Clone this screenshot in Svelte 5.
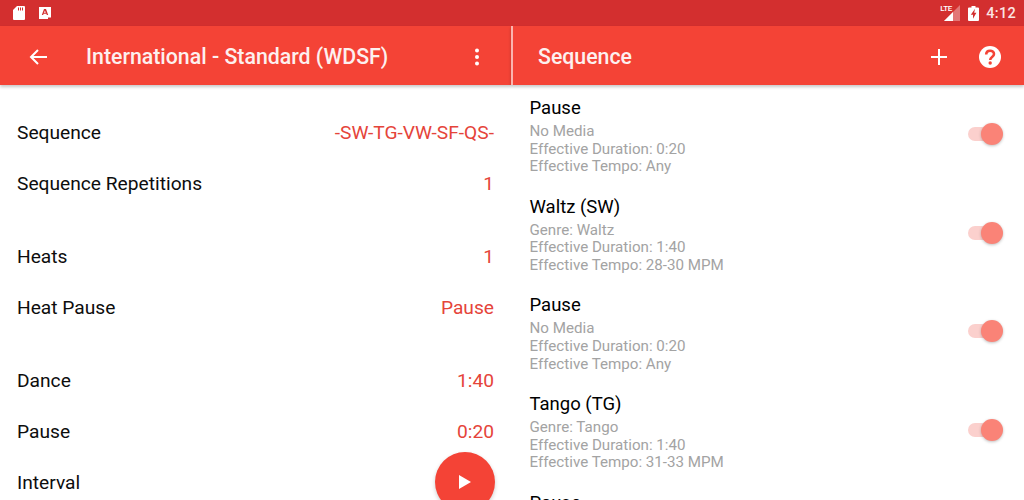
<script>
  const groups = [
    [{ k: 'Sequence', v: '-SW-TG-VW-SF-QS-' }, { k: 'Sequence Repetitions', v: '1' }],
    [{ k: 'Heats', v: '1' }, { k: 'Heat Pause', v: 'Pause' }],
    [{ k: 'Dance', v: '1:40' }, { k: 'Pause', v: '0:20' }, { k: 'Interval', v: '' }]
  ];
  const items = [
    { t: 'Pause', a: 'No Media', d: '0:20', e: 'Any' },
    { t: 'Waltz (SW)', a: 'Genre: Waltz', d: '1:40', e: '28-30 MPM' },
    { t: 'Pause', a: 'No Media', d: '0:20', e: 'Any' },
    { t: 'Tango (TG)', a: 'Genre: Tango', d: '1:40', e: '31-33 MPM' },
    { t: 'Pause', a: 'No Media', d: '0:20', e: 'Any' }
  ];
</script>

<div class="screen">
  <header class="status">
    <div class="status-left">
      <svg width="14" height="16" viewBox="0 0 14 16"><path fill="#fff" d="M5 1h7a1 1 0 0 1 1 1v12a1 1 0 0 1-1 1H2a1 1 0 0 1-1-1V5z"/><path fill="#d32f2f" d="M6 2.500h1v3H6zM8 2.500h1v3H8zM10 2.500h1v3h-1z"/></svg>
      <svg width="12" height="12" viewBox="0 0 12 12"><path fill="#fff" d="M0 0h12v10.500H9V12H0z"/><path fill="#d32f2f" d="M5 2h2l2.200 6H7.800l-.4-1.300H4.600L4.200 8H2.800zm.9 1.500-.9 2.200h1.800z"/></svg>
    </div>
    <div class="status-right">
      <span class="lte">LTE</span>
      <svg class="signal" width="16" height="16" viewBox="0 0 16 16"><path fill="#fff" fill-opacity=".35" d="M16 0v16H0z"/><path fill="#fff" d="M9 7v9H0z"/></svg>
      <svg class="battery" width="11" height="15" viewBox="0 0 11 15"><path fill="#fff" d="M3.500 0h4v1.500H10a1 1 0 0 1 1 1V14a1 1 0 0 1-1 1H1a1 1 0 0 1-1-1V2.500a1 1 0 0 1 1-1h2.500z"/><path fill="#d32f2f" d="M7 2.800 2.800 8.800H5v3.900l3.400-6H6.200z"/></svg>
      <span class="clock">4:12</span>
    </div>
  </header>

  <div class="panes">
    <section class="left">
      <div class="bar">
        <svg class="back" width="20" height="20" viewBox="0 0 20 20"><path fill="none" stroke="#fff" stroke-width="2" d="M19 10H3M10 3l-7 7 7 7"/></svg>
        <h1 class="title">International - Standard (WDSF)</h1>
        <svg class="more" width="6" height="20" viewBox="0 0 6 20"><circle cx="3" cy="3.500" r="2" fill="#fff"/><circle cx="3" cy="10" r="2" fill="#fff"/><circle cx="3" cy="16.500" r="2" fill="#fff"/></svg>
      </div>
      <div class="settings">
        {#each groups as g}
          <div class="group">
            {#each g as r}
              <div class="row"><span>{r.k}</span><span class="val">{r.v}</span></div>
            {/each}
          </div>
        {/each}
      </div>
      <button class="fab" aria-label="Play">
        <svg width="12" height="14" viewBox="0 0 12 14"><path fill="#fff" d="M0 0l12 7-12 7z"/></svg>
      </button>
    </section>

    <section class="right">
      <div class="bar bar-right">
        <h2 class="title">Sequence</h2>
        <svg class="plus" width="16" height="16" viewBox="0 0 16 16"><path fill="none" stroke="#fff" stroke-width="2" d="M8 0v16M0 8h16"/></svg>
        <svg class="help" width="24" height="24" viewBox="0 0 24 24"><path fill="#fff" d="M12 1a11 11 0 1 0 0 22 11 11 0 0 0 0-22z"/><path fill="none" stroke="#f44336" stroke-width="2.600" d="M8.200 9.500c0-5 7.800-5 7.800-.4 0 3-3.800 3-3.800 6"/><circle cx="12.200" cy="18" r="1.700" fill="#f44336"/></svg>
      </div>
      <div class="list">
        {#each items as it}
          <div class="item">
            <div class="text">
              <div class="name">{it.t}</div>
              <div class="sub">{it.a}</div>
              <div class="sub">Effective Duration: {it.d}</div>
              <div class="sub">Effective Tempo: {it.e}</div>
            </div>
            <div class="switch"><span class="track"></span><span class="thumb"></span></div>
          </div>
        {/each}
      </div>
    </section>
  </div>
</div>

<style>
  :global(body) { margin: 0; background: #fff; }
  .screen {
    width: 1024px; height: 500px; overflow: hidden; display: flex; flex-direction: column;
    font-family: Roboto, sans-serif; color: #111;
  }
  .status {
    height: 26px; flex: none; background: #d32f2f; display: flex; justify-content: space-between;
    align-items: center; padding: 0 8px 0 12px; box-sizing: border-box;
  }
  .status-left { display: flex; align-items: center; gap: 13px; }
  .status-right { display: flex; align-items: center; color: #fff; }
  .lte { font-size: 8px; font-weight: 500; letter-spacing: -.3px; margin: -9px -14px 0 0; width: 18px; }
  .signal { margin-right: 8px; }
  .battery { margin-right: 7px; }
  .clock { font-size: 14.500px; font-weight: 500; letter-spacing: .3px; color: #fbe4e2; }
  .panes { flex: 1; display: flex; min-height: 0; }
  .left { width: 511px; flex: none; position: relative; }
  .right { flex: 1; min-width: 0; border-left: 2px solid transparent; }
  .bar {
    height: 59px; background: #f44336; display: flex; align-items: center;
    box-shadow: 0 2px 3px rgba(0,0,0,.22); position: relative; padding: 2px 31px 0 28px; box-sizing: border-box;
  }
  .bar-right { margin-left: -2px; border-left: 2px solid #fbb4ae; padding: 2px 22px 0 25px; }
  .title { margin: 0; font-size: 21.300px; font-weight: 500; color: #fdf0ef; flex: 1; white-space: nowrap; }
  .left .title { margin-left: 38px; }
  .plus { margin-right: 31px; }
  .settings { padding-top: 22px; }
  .group { padding-bottom: 22px; }
  .row {
    height: 51px; display: flex; justify-content: space-between; align-items: center;
    padding: 0 17px; font-size: 19.200px; color: #0d0d0d;
  }
  .val { color: #e5443a; }
  .fab {
    position: absolute; left: 435px; top: 426px; width: 60px; height: 60px; padding: 0; border: 0;
    border-radius: 50%; background: #f44336; display: flex; align-items: center; justify-content: center;
    box-shadow: 0 2px 4px rgba(0,0,0,.2);
  }
  .list { padding-top: 11px; }
  .item {
    height: 98.700px; box-sizing: border-box; display: flex; align-items: flex-start; justify-content: space-between;
    padding: 0 22px 0 16.500px;
  }
  .name { font-size: 18.500px; line-height: 24px; color: #000; margin-bottom: 3px; }
  .sub { font-size: 15.150px; line-height: 17.700px; color: #a3a3a3; }
  .switch { position: relative; width: 34px; height: 24px; margin-top: 26px; }
  .track { position: absolute; left: 0; top: 5px; width: 34px; height: 14px; border-radius: 7px; background: #fbd0cd; }
  .thumb {
    position: absolute; right: -1px; top: 1px; width: 22px; height: 22px; border-radius: 50%;
    background: #fa8377; box-shadow: 0 1px 3px rgba(0,0,0,.25);
  }
</style>
